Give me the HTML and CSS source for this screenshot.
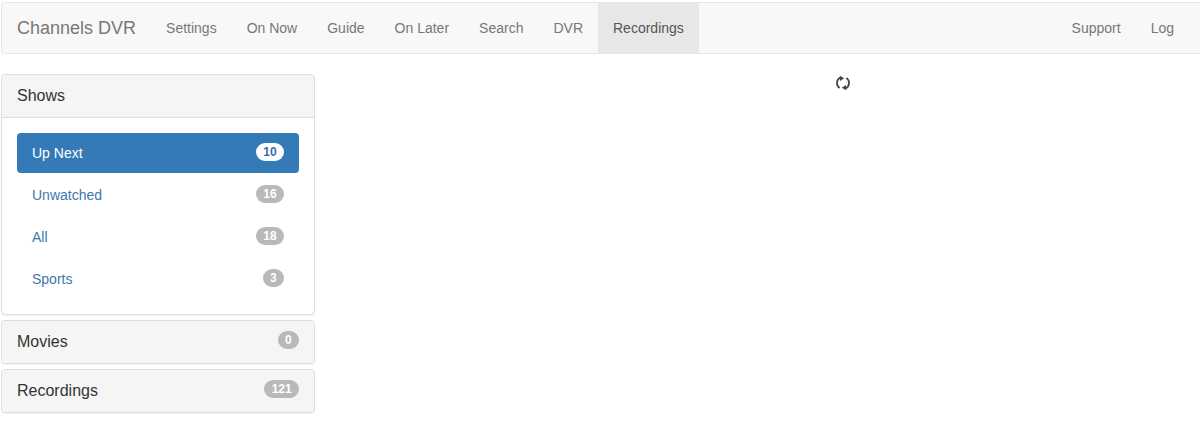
FILE: index.html
```html
<!DOCTYPE html>
<html>
<head>
    <title>Channels DVR</title>
    <link rel="stylesheet" href="styles.css">
</head>
<body>
    <nav class="navbar">
        <a class="brand" href="#">Channels DVR</a>
        <ul class="nav">
            <li><a href="#">Settings</a></li>
            <li><a href="#">On Now</a></li>
            <li><a href="#">Guide</a></li>
            <li><a href="#">On Later</a></li>
            <li><a href="#">Search</a></li>
            <li><a href="#">DVR</a></li>
            <li class="active"><a href="#">Recordings</a></li>
        </ul>
        <ul class="nav nav-right">
            <li><a href="#">Support</a></li>
            <li><a href="#">Log</a></li>
        </ul>
    </nav>

    <div class="content">
        <div class="sidebar">
            <div class="panel">
                <div class="panel-heading">Shows</div>
                <div class="panel-body">
                    <a class="pill active" href="#">Up Next <span class="badge">10</span></a>
                    <a class="pill" href="#">Unwatched <span class="badge">16</span></a>
                    <a class="pill" href="#">All <span class="badge">18</span></a>
                    <a class="pill" href="#">Sports <span class="badge">3</span></a>
                </div>
            </div>
            <div class="panel">
                <div class="panel-heading closed">Movies <span class="badge">0</span></div>
            </div>
            <div class="panel">
                <div class="panel-heading closed">Recordings <span class="badge">121</span></div>
            </div>
        </div>
        <div class="main">
            <svg class="spinner" viewBox="0 0 16 16" width="16" height="16">
                <path d="M4.6 13A6 6 0 0 1 5.4 2.6" />
                <path d="M11.4 3A6 6 0 0 1 10.6 13.4" />
                <polygon points="4.8,0.8 9.2,3.2 5,6" />
                <polygon points="11.2,15.2 6.8,12.8 11,10" />
            </svg>
        </div>
    </div>
</body>
</html>
```

FILE: styles.css
```css
* {
    box-sizing: border-box;
}
body {
    font-family: "Liberation Sans", Arial, sans-serif;
    font-size: 14px;
    line-height: 20px;
    color: #333;
    margin: 0;
    padding: 2px 0 0 1px;
}
a {
    text-decoration: none;
}
.navbar {
    display: flex;
    height: 52px;
    background-color: #f8f8f8;
    border: 1px solid #e7e7e7;
    border-right: none;
    border-radius: 4px 0 0 4px;
}
.brand {
    font-size: 18px;
    line-height: 20px;
    padding: 15px;
    color: #777;
}
.nav {
    display: flex;
    list-style: none;
    margin: 0;
    padding: 0;
}
.nav a {
    display: block;
    height: 50px;
    padding: 15px;
    color: #777;
}
.nav .active a {
    background-color: #e7e7e7;
    color: #555;
}
.nav-right {
    margin-left: auto;
    margin-right: 11px;
}
.content {
    display: flex;
    margin-top: 20px;
}
.sidebar {
    width: 314px;
}
.panel {
    background-color: #fff;
    border: 1px solid #ddd;
    border-radius: 4px;
    margin-bottom: 5px;
    box-shadow: 0 1px 1px rgba(0, 0, 0, .05);
}
.panel-heading {
    display: flex;
    justify-content: space-between;
    height: 43px;
    padding: 11px 15px 10px;
    font-size: 16px;
    line-height: 20px;
    background-color: #f5f5f5;
    border-bottom: 1px solid #ddd;
    border-radius: 3px 3px 0 0;
}
.panel-heading.closed {
    height: 42px;
    border-bottom: none;
    border-radius: 3px;
}
.panel-heading .badge {
    margin-top: -1px;
}
.panel-body {
    padding: 15px;
    height: 196px;
}
.pill {
    display: flex;
    justify-content: space-between;
    align-items: center;
    height: 40px;
    padding: 0 15px;
    margin-bottom: 2px;
    color: #3c78ad;
    border-radius: 4px;
}
.pill.active {
    background-color: #337ab7;
    color: #fff;
}
.badge {
    display: inline-block;
    min-width: 10px;
    height: 18px;
    padding: 3px 7.3px;
    font-size: 12px;
    font-weight: bold;
    line-height: 12px;
    color: #fff;
    text-align: center;
    background-color: #b9b9b9;
    border-radius: 10px;
}
.pill .badge {
    margin-top: -2px;
}
.pill.active .badge {
    background-color: #fff;
    color: #3c6aa8;
}
.main {
    flex: 1;
    display: flex;
    justify-content: center;
    align-items: flex-start;
    padding-left: 170px;
}
.spinner {
    margin-top: 1px;
}
.spinner path {
    fill: none;
    stroke: #444;
    stroke-width: 1.7;
}
.spinner polygon {
    fill: #444;
}
```
